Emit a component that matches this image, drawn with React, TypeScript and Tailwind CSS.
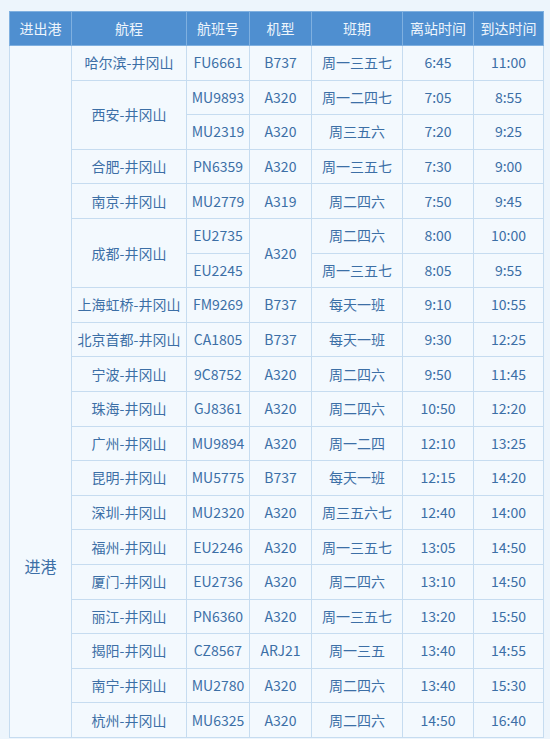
import React from "react";

type Row = {
  route?: string;
  routeSpan?: number;
  flight: string;
  plane?: string;
  planeSpan?: number;
  days: string;
  dep: string;
  arr: string;
};

const ROWS: Row[] = [
  { route: "哈尔滨-井冈山", flight: "FU6661", plane: "B737", days: "周一三五七", dep: "6:45", arr: "11:00" },
  { route: "西安-井冈山", routeSpan: 2, flight: "MU9893", plane: "A320", days: "周一二四七", dep: "7:05", arr: "8:55" },
  { flight: "MU2319", plane: "A320", days: "周三五六", dep: "7:20", arr: "9:25" },
  { route: "合肥-井冈山", flight: "PN6359", plane: "A320", days: "周一三五七", dep: "7:30", arr: "9:00" },
  { route: "南京-井冈山", flight: "MU2779", plane: "A319", days: "周二四六", dep: "7:50", arr: "9:45" },
  { route: "成都-井冈山", routeSpan: 2, flight: "EU2735", plane: "A320", planeSpan: 2, days: "周二四六", dep: "8:00", arr: "10:00" },
  { flight: "EU2245", days: "周一三五七", dep: "8:05", arr: "9:55" },
  { route: "上海虹桥-井冈山", flight: "FM9269", plane: "B737", days: "每天一班", dep: "9:10", arr: "10:55" },
  { route: "北京首都-井冈山", flight: "CA1805", plane: "B737", days: "每天一班", dep: "9:30", arr: "12:25" },
  { route: "宁波-井冈山", flight: "9C8752", plane: "A320", days: "周二四六", dep: "9:50", arr: "11:45" },
  { route: "珠海-井冈山", flight: "GJ8361", plane: "A320", days: "周二四六", dep: "10:50", arr: "12:20" },
  { route: "广州-井冈山", flight: "MU9894", plane: "A320", days: "周一二四", dep: "12:10", arr: "13:25" },
  { route: "昆明-井冈山", flight: "MU5775", plane: "B737", days: "每天一班", dep: "12:15", arr: "14:20" },
  { route: "深圳-井冈山", flight: "MU2320", plane: "A320", days: "周三五六七", dep: "12:40", arr: "14:00" },
  { route: "福州-井冈山", flight: "EU2246", plane: "A320", days: "周一三五七", dep: "13:05", arr: "14:50" },
  { route: "厦门-井冈山", flight: "EU2736", plane: "A320", days: "周二四六", dep: "13:10", arr: "14:50" },
  { route: "丽江-井冈山", flight: "PN6360", plane: "A320", days: "周一三五七", dep: "13:20", arr: "15:50" },
  { route: "揭阳-井冈山", flight: "CZ8567", plane: "ARJ21", days: "周一三五", dep: "13:40", arr: "14:55" },
  { route: "南宁-井冈山", flight: "MU2780", plane: "A320", days: "周二四六", dep: "13:40", arr: "15:30" },
  { route: "杭州-井冈山", flight: "MU6325", plane: "A320", days: "周二四六", dep: "14:50", arr: "16:40" },
];

const HEADERS = ["进出港", "航程", "航班号", "机型", "班期", "离站时间", "到达时间"];
const WIDTHS = ["w-[62px]", "w-[115px]", "w-[63px]", "w-[62px]", "w-[91px]", "w-[71px]", "w-[70px]"];

const td = "border border-[#c6dcf0] text-center align-middle px-0 py-0";

export default function App() {
  return (
    <div
      className="w-[550px] h-[739px] overflow-hidden bg-[#edf5fc] pt-[11px] pl-[9px]"
      style={{ fontFamily: '"Noto Sans CJK SC", "Noto Sans", sans-serif' }}
    >
      <table className="border-collapse table-fixed w-[534px] text-[14px] text-[#3c6fa6] bg-[#f3f9fe] border border-[#b9d6f0]">
        <colgroup>
          {WIDTHS.map((w, i) => (
            <col key={i} className={w} />
          ))}
        </colgroup>
        <thead>
          <tr className="h-[34px] bg-[#4f8fd0] text-[#eef5fc]">
            {HEADERS.map((h) => (
              <th key={h} className="border border-[#7fb0e0] font-normal text-center align-middle">
                {h}
              </th>
            ))}
          </tr>
        </thead>
        <tbody>
          {ROWS.map((r, i) => (
            <tr key={i} className="h-[34.6px]">
              {/* the arrivals cell runs on past the bottom of the view, so its label sits low */}
              {i === 0 && (
                <td rowSpan={ROWS.length} className={`${td} align-top pt-[509px] leading-[22px] text-[16px]`}>
                  进港
                </td>
              )}
              {r.route && (
                <td rowSpan={r.routeSpan ?? 1} className={td}>
                  {r.route}
                </td>
              )}
              <td className={td}>{r.flight}</td>
              {r.plane && (
                <td rowSpan={r.planeSpan ?? 1} className={td}>
                  {r.plane}
                </td>
              )}
              <td className={td}>{r.days}</td>
              <td className={td}>{r.dep}</td>
              <td className={td}>{r.arr}</td>
            </tr>
          ))}
        </tbody>
      </table>
    </div>
  );
}
